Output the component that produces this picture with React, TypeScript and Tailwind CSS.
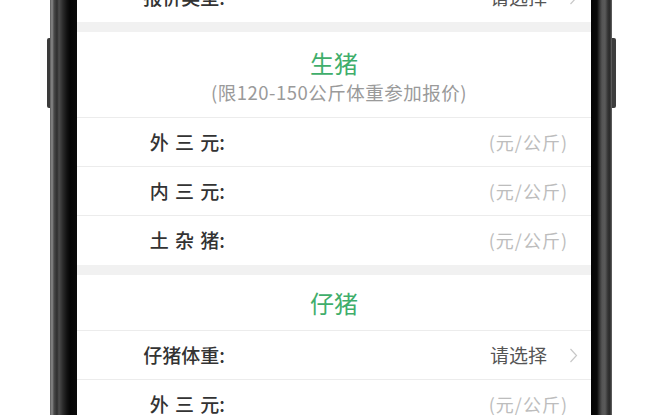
import React from 'react';

const font = { fontFamily: '"Noto Sans CJK SC", "Noto Sans", sans-serif' };

function Chevron() {
  return (
    <svg width="9" height="15" viewBox="0 0 9 15" className="ml-[22px]">
      <path d="M1.5 1 L7.5 7.5 L1.5 14" fill="none" stroke="#c8c8c8" strokeWidth="1.2" />
    </svg>
  );
}

function Row({ label, select, last }: { label: string; select?: boolean; last?: boolean }) {
  return (
    <div className={`flex h-[49px] items-center ${last ? '' : 'border-b border-[#ececec]'}`}>
      <div className="w-[148px] shrink-0 text-right text-[19px] font-medium text-[#333] whitespace-pre">{label}</div>
      <div className="flex flex-1 items-center justify-end pr-[13px]">
        {select ? (
          <>
            <span className="text-[19px] text-[#555]">请选择</span>
            <Chevron />
          </>
        ) : (
          <span className="pr-[10px] text-[18px] tracking-[1px] text-[#bdbdbd]">(元/公斤)</span>
        )}
      </div>
    </div>
  );
}

export default function App() {
  return (
    <div className="flex h-[415px] w-[670px] overflow-hidden bg-white" style={font}>
      <div className="w-[47px] shrink-0" />
      <div className="mt-[38px] h-[70px] w-[3px] shrink-0 rounded-l-[2px] bg-[#3a3a3a]" />
      <div className="h-full w-[27px] shrink-0 bg-[linear-gradient(to_right,#5a5a5a_0px,#8a8a8a_2px,#4a4a4a_4px,#2e2e2e_7px,#4c4c4c_9px,#2a2a2a_13px,#111_17px,#050505_20px,#0a0a0a_27px)]" />

      <div className="h-full w-[514px] shrink-0 overflow-hidden bg-white">
        <div className="-mt-[27px]">
          <Row label="报价类型:" select last />
          <div className="h-[10px] bg-[#f1f1f1]" />

          <div className="flex h-[86px] flex-col items-center border-b border-[#ececec] pt-[15px]">
            <div className="text-[24px] leading-[32px] text-[#3fae6b]">生猪</div>
            <div className="pl-[10px] text-[18.5px] leading-[26px] tracking-[0.5px] text-[#9a9a9a]">(限120-150公斤体重参加报价)</div>
          </div>
          <Row label={'外\u2004三\u2004元:'} />
          <Row label={'内\u2004三\u2004元:'} />
          <Row label={'土\u2004杂\u2004猪:'} last />
          <div className="h-[10px] bg-[#f1f1f1]" />

          <div className="flex h-[56px] items-center justify-center border-b border-[#ececec]">
            <div className="text-[24px] leading-[32px] text-[#3fae6b]">仔猪</div>
          </div>
          <Row label="仔猪体重:" select />
          <Row label={'外\u2004三\u2004元:'} />
          <Row label={'内\u2004三\u2004元:'} />
        </div>
      </div>

      <div className="h-full w-[21px] shrink-0 bg-[linear-gradient(to_right,#050505_0px,#0a0a0a_6px,#2c2c2c_8px,#555_11px,#5a5a5a_14px,#333_17px,#2a2a2a_19px,#6a6a6a_21px)]" />
      <div className="mt-[38px] h-[70px] w-[4px] shrink-0 rounded-r-[2px] bg-[#3d3d3d]" />
    </div>
  );
}
